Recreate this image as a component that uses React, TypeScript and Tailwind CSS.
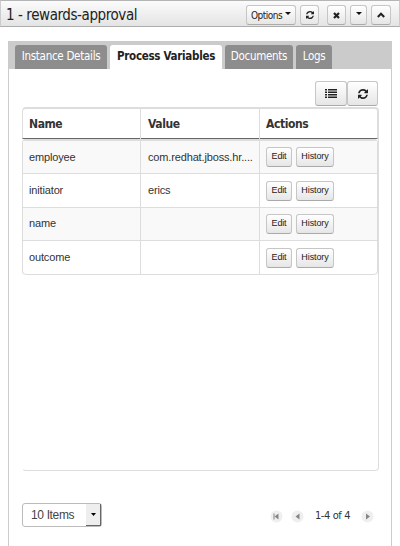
import React from "react";

const btn =
  "flex shrink-0 items-center justify-center rounded-[3px] border border-[#c6c6c6] border-b-[#aaa] bg-gradient-to-b from-white to-[#e6e6e6] text-[#222]";
const dejavu = "font-['DejaVu_Sans_Condensed','DejaVu_Sans',sans-serif] [font-stretch:condensed]";

function Caret() {
  return (
    <svg width="6" height="3" viewBox="0 0 6 3" className="shrink-0">
      <path d="M0 0H6L3 3Z" fill="#111" />
    </svg>
  );
}

function Refresh({ size }: { size: number }) {
  return (
    <svg width={size} height={size} viewBox="0 0 1536 1536" fill="#222">
      <path d="M1511 928q0 5-1 7-64 268-268 434.500T764 1536q-146 0-282.500-55T238 1324l-129 129q-19 19-45 19t-45-19-19-45V960q0-26 19-45t45-19h448q26 0 45 19t19 45-19 45l-137 137q71 66 161 102t187 36q134 0 250-65t186-179q11-17 53-117 8-23 30-23h192q13 0 22.500 9.500t9.500 22.500zm25-800v448q0 26-19 45t-45 19h-448q-26 0-45-19t-19-45 19-45l138-138Q969 256 768 256q-134 0-250 65T332 500q-11 17-53 117-8 23-30 23H50q-13 0-22.500-9.500T18 608v-7q65-268 270-434.500T768 0q146 0 284 55.500T1297 212l130-129q19-19 45-19t45 19 19 45z" />
    </svg>
  );
}

function Tab({ text, box, active }: { text: string; box: string; active?: boolean }) {
  return (
    <div
      className={`${box} flex h-6 shrink-0 items-center justify-center whitespace-nowrap rounded-t-[3px] ${
        active ? "bg-white font-bold text-[#222] tracking-[-0.290px]" : "bg-[#8d8d8d] text-white tracking-[-0.280px]"
      }`}
    >
      {text}
    </div>
  );
}

const rows = [
  { name: "employee", value: "com.redhat.jboss.hr....", box: "h-[33px] bg-[#f9f9f9]", actions: "pt-1.5", line: "leading-[32px]" },
  { name: "initiator", value: "erics", box: "h-[34px]", actions: "pt-[7px]", line: "leading-[33px]" },
  { name: "name", value: "", box: "h-[33px] bg-[#f9f9f9]", actions: "pt-1.5", line: "leading-[31px]" },
  { name: "outcome", value: "", box: "h-[34px] rounded-b-[4px]", actions: "pt-[7px]", line: "leading-[32px]" },
];

function PageButton({ first, next }: { first?: boolean; next?: boolean }) {
  return (
    <svg width="13" height="13" viewBox="0 0 13 13" className="shrink-0">
      <circle cx="6.500" cy="6.500" r="6" fill="#efefef" />
      <path d={next ? "M5 3.500V9.500L9 6.500Z" : "M8.500 3.500V9.500L4.500 6.500Z"} fill="#858585" />
      {first && <path d="M3.500 3.500H4.500V9.500H3.500Z" fill="#858585" />}
    </svg>
  );
}

export default function App() {
  return (
    <div className="flex h-[546px] w-[400px] flex-col overflow-hidden bg-white font-['Liberation_Sans',Arial,sans-serif] text-[#333]">
      <header className="flex h-[27px] shrink-0 border-x border-y border-x-[#ccc] border-b-[#adadad] border-t-[#b5b5b5] bg-gradient-to-b from-[#fbfbfb] to-[#e4e4e4] pl-[5px] pr-2">
        <h1 className={`${dejavu} flex-1 whitespace-nowrap text-[15px] leading-[28px] tracking-[-0.420px] text-[#222]`}>
          1 - rewards-approval
        </h1>
        <div className="mt-1 flex h-5">
          <button className={`${btn} ${dejavu} w-[50px] gap-[3px] text-[10px] tracking-[-0.500px]`}>
            Options
            <span className="mb-1"><Caret /></span>
          </button>
          <button className={`${btn} ml-1 w-[19px]`}><Refresh size={8} /></button>
          <button className={`${btn} ml-2 w-[19px]`}>
            <svg width="7" height="7" viewBox="0 0 7 7"><path d="M1 1L6 6M6 1L1 6" stroke="#222" strokeWidth="2.200" /></svg>
          </button>
          <button className={`${btn} ml-1 w-[17px] pb-1`}><Caret /></button>
          <button className={`${btn} ml-1 w-5`}>
            <svg width="8" height="6" viewBox="0 0 8 6"><path d="M.8 5L4 1.700L7.200 5" fill="none" stroke="#222" strokeWidth="2" /></svg>
          </button>
        </div>
      </header>
      <main className="mx-2 mt-[14px] flex flex-1 flex-col">
        <nav className={`${dejavu} flex h-7 shrink-0 gap-[3px] bg-[#cbcbcb] pl-[7px] pt-1 text-[11.500px]`}>
          <Tab text="Instance Details" box="w-[92px]" />
          <Tab text="Process Variables" box="w-[112px]" active />
          <Tab text="Documents" box="w-[68px]" />
          <Tab text="Logs" box="w-9" />
        </nav>
        <section className="flex flex-1 flex-col border-x border-[#ccc] pl-[13px] pr-3 pt-3">
          <div className="flex h-[26px] justify-end">
            <button className={`${btn} h-[25px] w-8`}>
              <svg width="12" height="9" viewBox="0 0 12 9" fill="#222">
                <path d="M0 0H2V1.500H0ZM3 0H12V1.500H3ZM0 2.500H2V4H0ZM3 2.500H12V4H3ZM0 5H2V6.500H0ZM3 5H12V6.500H3ZM0 7.500H2V9H0ZM3 7.500H12V9H3Z" />
              </svg>
            </button>
            <button className={`${btn} mr-px h-[25px] w-[31px]`}><Refresh size={10} /></button>
          </div>
          <div className="flex h-[364px] flex-col rounded-[4px] border border-t-2 border-[#ddd] border-l-transparent">
            <div className={`${dejavu} -ml-px -mt-px grid h-[31px] grid-cols-[117px_119px_1fr] rounded-t-[4px] border-b border-l border-r border-b-[#666] border-l-[#ddd] border-r-[#ddd] text-[12px] font-bold tracking-[-0.400px]`}>
              <div className="pl-1.5 leading-[32px]">Name</div>
              <div className="border-l border-[#ddd] pl-[7px] leading-[32px]">Value</div>
              <div className="border-l border-[#ddd] pl-1.5 leading-[32px]">Actions</div>
            </div>
            <div className="-ml-px rounded-[4px] border border-b-0 border-t-2 border-[#ddd] text-[11px] tracking-[-0.150px]">
              {rows.map((r) => (
                <div key={r.name} className={`${r.box} grid grid-cols-[117px_119px_1fr] border-b border-[#ddd]`}>
                  <div className={`pl-1.5 ${r.line}`}>{r.name}</div>
                  <div className={`whitespace-nowrap border-l border-[#ddd] pl-[7px] ${r.line}`}>{r.value}</div>
                  <div className={`flex gap-1 border-l border-[#ddd] pl-1.5 ${r.actions}`}>
                    <button className={`${btn} h-5 w-[26px] text-[9px]`}>Edit</button>
                    <button className={`${btn} h-5 w-[38px] text-[9px] tracking-[-0.100px]`}>History</button>
                  </div>
                </div>
              ))}
            </div>
          </div>
          <div className="mt-8 flex h-6 items-center justify-between">
            <div className="flex h-6 w-20 rounded-[3px] border border-[#bbb]">
              <span className="flex-1 whitespace-nowrap pl-2 text-[12px] leading-[23px] tracking-[-0.350px] text-[#444]">10 Items</span>
              <span className="flex w-[15px] items-center justify-center border-b border-r border-[#666] bg-[#eee]">
                <svg width="5" height="3" viewBox="0 0 5 3"><path d="M0 0H5L2.500 3Z" fill="#000" /></svg>
              </span>
            </div>
            <div className="flex items-center pr-[5px] pt-[3px]">
              <PageButton first />
              <span className="w-2" />
              <PageButton />
              <span className={`${dejavu} w-[57px] text-center text-[11px] tracking-[-0.400px]`}>1-4 of 4</span>
              <PageButton next />
            </div>
          </div>
        </section>
      </main>
    </div>
  );
}
